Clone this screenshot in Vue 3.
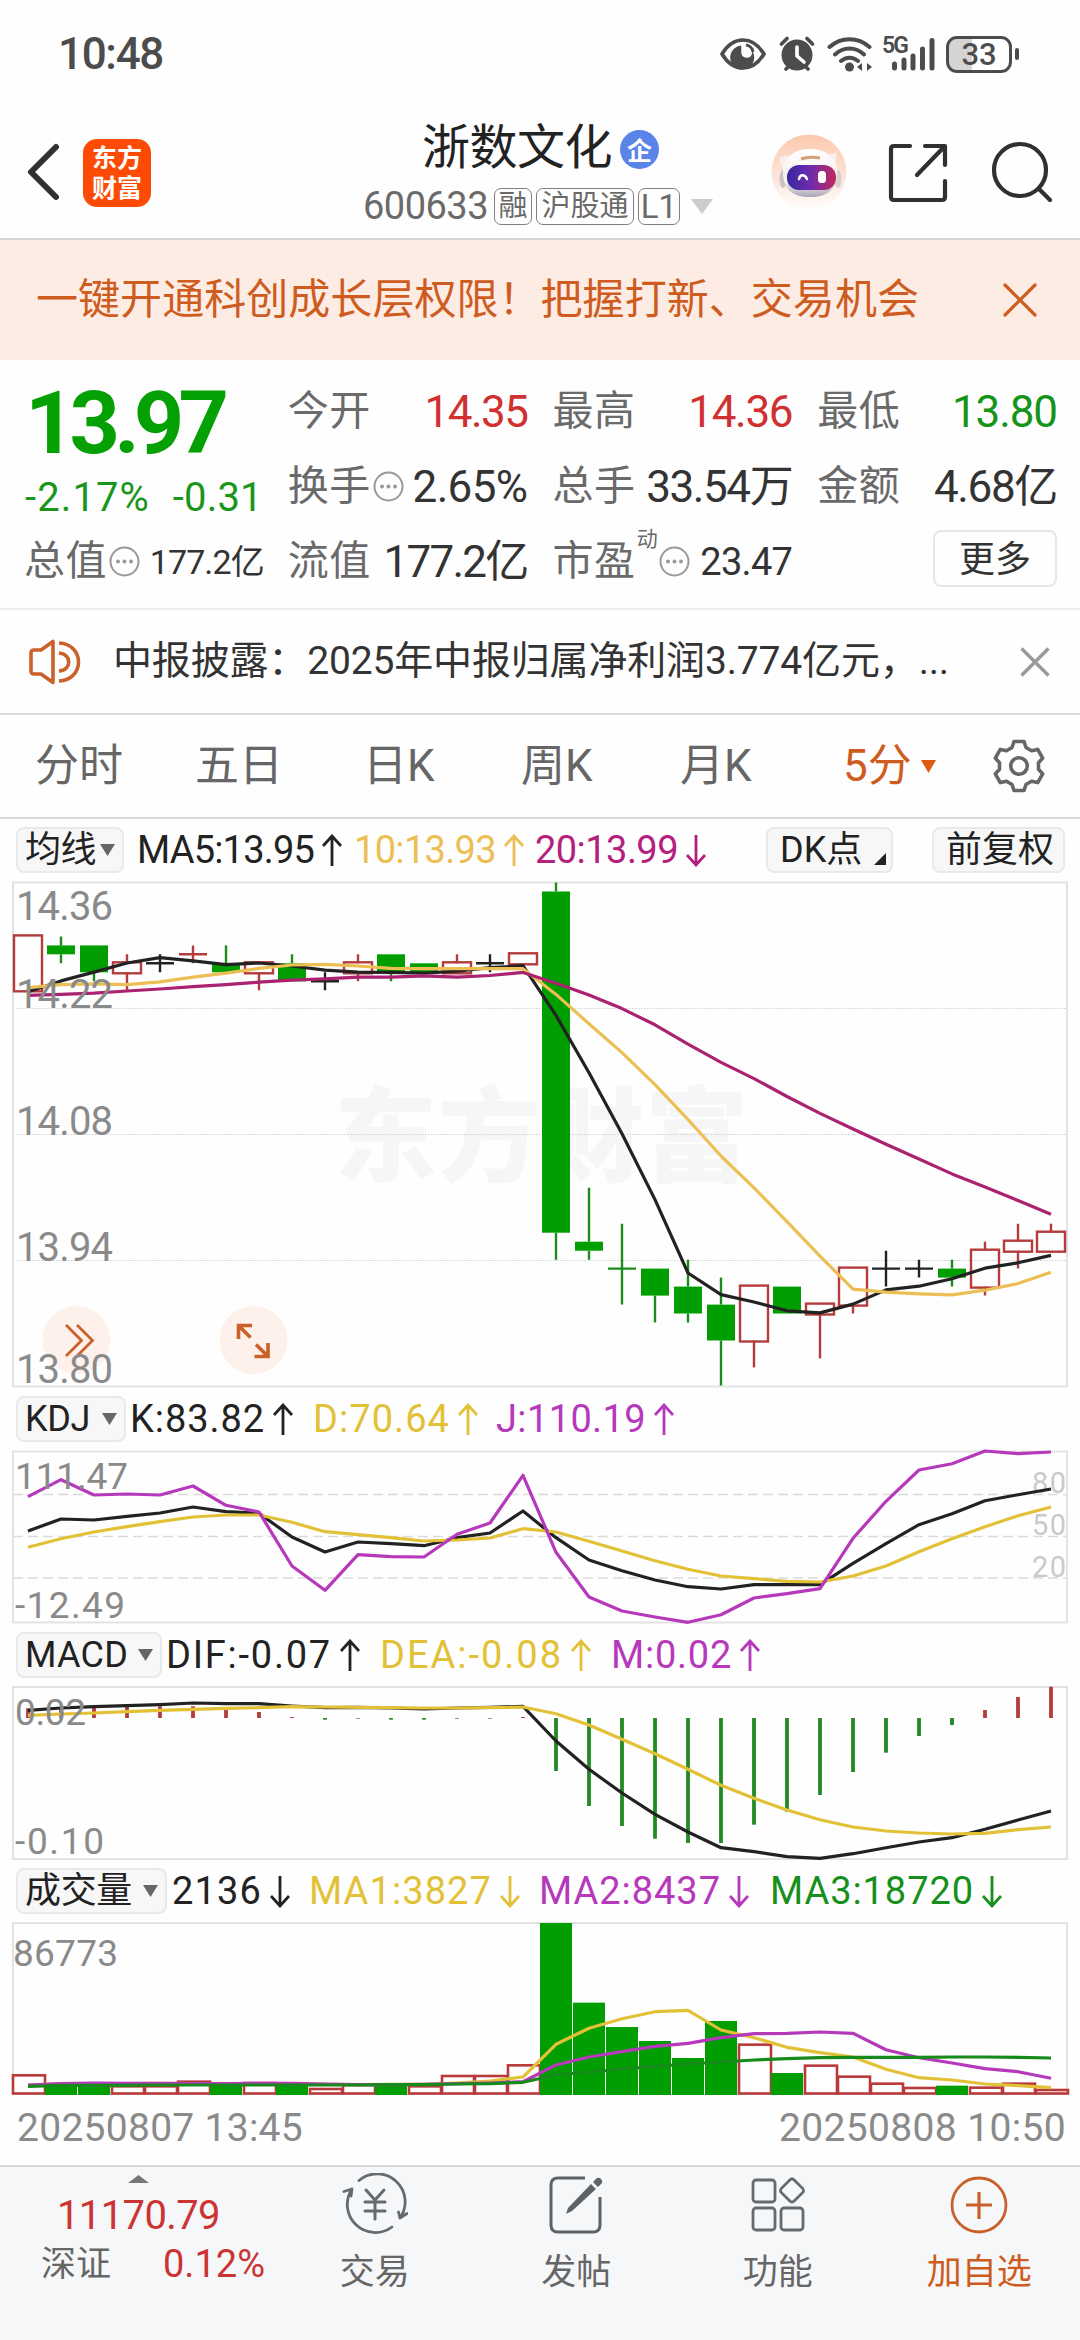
<template>
  <div class="page">
    <div class="status">
      <span v-fit="105" class="clock">10:48</span>
      <div class="status-icons">
        <svg class="eye" width="46" height="34" viewBox="0 0 46 34">
          <path d="M2 17C8 7 15 3 23 3s15 4 21 14c-6 10-13 14-21 14S8 27 2 17z" fill="none" stroke="#4c4c4c" stroke-width="3.6" />
          <path d="M21 8.500a12 12 0 1 0 11 5c1 7-5 9-9 6-3-3-1-7-2-11z" fill="#4c4c4c" />
          <path d="M26 8a8 8 0 0 1 7 7" fill="none" stroke="#4c4c4c" stroke-width="3" />
        </svg>
        <svg class="alarm" width="36" height="36" viewBox="0 0 36 36" stroke="#4c4c4c" stroke-width="3.600" stroke-linecap="round">
          <path d="M2.500 8L8 2.500M33.500 8L28 2.500M7 33l4-4M29 33l-4-4" />
          <circle cx="18" cy="19" r="15.500" fill="#4c4c4c" stroke="none" />
          <path d="M18 11v9l7 6" fill="none" stroke="#fff" />
        </svg>
        <svg class="wifi" width="46" height="36" viewBox="0 0 46 36" fill="none" stroke="#4c4c4c" stroke-width="4" stroke-linecap="round">
          <path d="M2.500 11C14 .500 31 .500 42.500 11M8 18.500c8.500-8 20.500-8 29 0M14 25c5-4.500 12-4.500 17 0" />
          <circle cx="22.500" cy="31" r="4.500" fill="#4c4c4c" stroke="none" />
          <path d="M35 27v8l-5-4zM38 27v8M40 27l5 4-5 4z" fill="#4c4c4c" stroke="none" />
        </svg>
        <div class="signal">
          <span class="net">5G</span>
          <svg width="44" height="34" viewBox="0 0 44 34" stroke="#4c4c4c" stroke-width="5" stroke-linecap="round">
            <path d="M3.500 27v4M13 23v8M22 19v12M31.500 12v19M41 3.500v27.500" />
          </svg>
        </div>
        <div class="battery"><span>33</span></div>
        <i class="nub"></i>
      </div>
    </div>

    <header class="header">
      <svg class="back" width="34" height="58" viewBox="0 0 34 58"><path d="M30 4L5 29l25 25" fill="none" stroke="#2f3031" stroke-width="6" stroke-linecap="round" stroke-linejoin="round" /></svg>
      <div class="logo"><span>东方</span><span>财富</span></div>
      <div class="title-box">
        <div class="title"><span v-fit="190">浙数文化</span><i class="badge">企</i></div>
        <div class="sub">
          <span v-fit="125" class="code">600633</span>
          <b class="tag">融</b><b class="tag wide">沪股通</b><b class="tag l1">L1</b>
          <svg width="22" height="15" viewBox="0 0 22 15"><path d="M0 0h22L11 15z" fill="#ccc" /></svg>
        </div>
      </div>
      <svg class="robot" width="76" height="76" viewBox="0 0 76 76">
        <defs>
          <linearGradient id="halo" x1="0" y1="0" x2="0" y2="1">
            <stop offset="0" stop-color="#fcc9ae" /><stop offset=".6" stop-color="#fde6dc" /><stop offset="1" stop-color="#fffdfc" />
          </linearGradient>
          <linearGradient id="shell" x1="0" y1="0" x2="0" y2="1">
            <stop offset="0" stop-color="#fff" /><stop offset=".7" stop-color="#f3ecea" /><stop offset="1" stop-color="#a9a5b4" />
          </linearGradient>
          <linearGradient id="visor" x1="0" y1="0" x2="1" y2="0">
            <stop offset="0" stop-color="#37289f" /><stop offset=".45" stop-color="#6a2bb0" /><stop offset="1" stop-color="#c22a5c" />
          </linearGradient>
        </defs>
        <circle cx="38" cy="38" r="37.500" fill="url(#halo)" />
        <ellipse cx="12" cy="45" rx="3.500" ry="9" fill="#c9c2c4" />
        <ellipse cx="67" cy="45" rx="3.500" ry="9" fill="#d9ced0" />
        <path d="M8 24l8-3 4 10-7 8zM66 19l-8 1-3 9 9 6z" fill="#f8eeea" />
        <path d="M12 38c0-15 12-23 27-23s27 8 27 23c0 18-10 25-27 25S12 56 12 38z" fill="url(#shell)" />
        <path d="M30 25q8-3 19-1" stroke="#d6a075" stroke-width="3" fill="none" />
        <rect x="16" y="31" width="49" height="25" rx="12" fill="url(#visor)" />
        <path d="M28 45c1-5 6-5 8 0" stroke="#fff" stroke-width="2.500" fill="none" stroke-linecap="round" />
        <rect x="47" y="37" width="8" height="12" rx="3.500" fill="#fff" />
      </svg>
      <svg class="share" width="60" height="60" viewBox="0 0 60 60" fill="none" stroke="#2f3031" stroke-width="4.200" stroke-linecap="round" stroke-linejoin="round">
        <path d="M22 3H6q-3 0-3 3v48q0 3 3 3h48q3 0 3-3V38" />
        <path d="M37 3h20v19M56 4L29 32" />
      </svg>
      <svg class="search" width="62" height="62" viewBox="0 0 62 62" fill="none" stroke="#2f3031" stroke-width="4.200" stroke-linecap="round">
        <circle cx="29" cy="29" r="26" /><path d="M48 48l11 11" />
      </svg>
    </header>

    <div class="banner">
      <span v-fit="883">一键开通科创成长层权限！把握打新、交易机会</span>
      <svg width="34" height="34" viewBox="0 0 34 34"><path d="M2 2l30 30M32 2L2 32" stroke="#cf5c1f" stroke-width="3.200" stroke-linecap="round" /></svg>
    </div>

    <section class="quote">
      <div class="col first">
        <div class="price"><span v-fit="198">13.97</span></div>
        <div class="change"><span v-fit="125">-2.17%</span><span v-fit="90">-0.31</span></div>
        <div class="cell">
          <span class="label">总值</span><MoreDot />
          <span v-fit="114" class="value small">177.2亿</span>
        </div>
      </div>
      <div v-for="(col, c) in quoteCols" :key="c" class="col">
        <div v-for="q in col" :key="q.label" class="cell">
          <span class="label">{{ q.label }}</span><sup v-if="q.sup">{{ q.sup }}</sup><MoreDot v-if="q.dot" />
          <span v-fit="q.w" class="value" :class="q.cls">{{ q.value }}</span>
        </div>
        <button v-if="c === 2" class="more">更多</button>
      </div>
    </section>

    <div class="news">
      <svg width="52" height="46" viewBox="0 0 52 46" fill="none" stroke="#c9622b" stroke-width="3.600" stroke-linejoin="round">
        <path d="M24 2.500v41L12 35H5q-3 0-3-3V14q0-3 3-3h7z" />
        <path d="M30 4c26 1 26 37 0 38M30 14c13 1 13 17 0 18" stroke-linecap="butt" />
      </svg>
      <span v-fit="836" class="news-text">中报披露：2025年中报归属净利润3.774亿元，...</span>
      <svg class="close" width="30" height="30" viewBox="0 0 30 30"><path d="M1.500 1.500l27 27M28.500 1.500l-27 27" stroke="#999" stroke-width="3.400" /></svg>
    </div>

    <nav class="tabs">
      <span v-for="t in tabs" :key="t">{{ t }}</span>
      <span class="active">5分<svg width="15" height="13" viewBox="0 0 15 13"><path d="M0 0h15L7.500 13z" fill="#dd5a10" /></svg></span>
      <svg class="gear" width="54" height="54" viewBox="-27 -27 54 54" fill="none" stroke="#666" stroke-width="3.600" stroke-linejoin="round">
        <polygon :points="gear" /><circle r="8.300" />
      </svg>
    </nav>

    <IndicatorRow :row="rows.ma">
      <button class="chip dk">DK点<i></i></button>
      <button class="chip fq">前复权</button>
    </IndicatorRow>
    <svg class="chart" width="1080" height="507" viewBox="0 881 1080 507">
      <text class="watermark" x="334" y="1174" textLength="414">东方财富</text>
      <rect class="frame" x="13" y="882.500" width="1054" height="504" />
      <path class="dots" d="M17 1008.500H1066M17 1134.500H1066M17 1260.500H1066" />
      <circle v-for="x in [76.5, 253.5]" :key="x" :cx="x" cy="1340" r="34" fill="#fef0ea" />
      <path class="tool" d="M66 1325l15.500 15.500L66 1356M77 1325l15.500 15.500L77 1356" />
      <path class="tool thick" d="M238.500 1339v-13.500H252M238.500 1325.500l12 12M268 1343v13.500H254.500M268 1356.500l-12-12" />
      <g v-for="(k, i) in candles" :key="i" :class="k.color">
        <path :d="k.wick" class="wick" />
        <rect v-if="k.body" class="body" v-bind="k.body" />
      </g>
      <polyline v-for="l in priceLines" :key="l.color" :points="l.points" :stroke="l.color" class="line" />
      <text v-for="p in priceLabels" :key="p.t" class="axis big" x="16" :y="p.y" textLength="97">{{ p.t }}</text>
    </svg>

    <IndicatorRow :row="rows.kdj" />
    <svg class="chart" width="1080" height="174" viewBox="0 1449 1080 174">
      <rect class="frame" x="13" y="1450.500" width="1054" height="171" />
      <path class="dashes" d="M13 1493.500H1066M13 1535.500H1066M13 1577H1066" />
      <text v-for="r in [{ t: '80', y: 1492 }, { t: '50', y: 1534 }, { t: '20', y: 1576 }]" :key="r.t" class="ref" x="1032" :y="r.y" textLength="34">{{ r.t }}</text>
      <polyline v-for="l in kdjLines" :key="l.color" :points="l.points" :stroke="l.color" class="line" />
      <text class="axis" x="15" y="1488" textLength="113">111.47</text>
      <text class="axis" x="15" y="1617" textLength="110">-12.49</text>
    </svg>

    <IndicatorRow :row="rows.macd" />
    <svg class="chart" width="1080" height="174" viewBox="0 1685 1080 174">
      <rect class="frame" x="13" y="1686" width="1054" height="172" />
      <path v-for="(b, i) in macdBars" :key="i" :d="b.d" :stroke="b.color" stroke-width="3.800" />
      <polyline v-for="l in macdLines" :key="l.color" :points="l.points" :stroke="l.color" class="line" />
      <text class="axis" x="15" y="1724" textLength="71">0.02</text>
      <text class="axis" x="15" y="1853" textLength="89">-0.10</text>
    </svg>

    <IndicatorRow :row="rows.vol" />
    <svg class="chart" width="1080" height="174" viewBox="0 1921 1080 174">
      <rect class="frame" x="13" y="1922" width="1054" height="171" />
      <rect v-for="(b, i) in volBars" :key="i" v-bind="b" stroke-width="2.600" />
      <polyline v-for="l in volLines" :key="l.color" :points="l.points" :stroke="l.color" class="line" />
      <text class="axis" x="13" y="1965" textLength="105">86773</text>
    </svg>

    <div class="dates"><span v-fit="286">20250807 13:45</span><span v-fit="287">20250808 10:50</span></div>

    <footer class="bottom">
      <div class="index">
        <svg width="21" height="8" viewBox="0 0 21 8"><path d="M10.500 0L21 8H0z" fill="#777" /></svg>
        <span v-fit="163" class="index-value">11170.79</span>
        <div class="index-row"><span>深证</span><span v-fit="102" class="rate">0.12%</span></div>
      </div>
      <div class="action">
        <svg width="66" height="62" viewBox="0 0 66 62" fill="none" stroke="#666a6e" stroke-width="2.800" stroke-linecap="round" stroke-linejoin="round">
          <path d="M17 7.500A28 28 0 0 1 58 45l7-4.500M50 54A28 28 0 0 1 10 16l-8 2.500M58 45l-1.500-6M10 16l-1 7" />
          <path d="M24 17l9 10 9-10M23 29h20M23 38h20M33 28v18" stroke-width="3" />
        </svg>
        <span>交易</span>
      </div>
      <div class="action">
        <svg width="56" height="62" viewBox="0 0 56 62" fill="none" stroke="#5f6265" stroke-width="3">
          <path d="M37 5H10q-7 0-7 7v40q0 7 7 7h35q7 0 7-7V24" />
          <path d="M45 9l4-4q2-1 4 1t1 4l-4 4zM43 11l5 5-24 22-6 3 2-6z" fill="#5f6265" stroke="none" />
        </svg>
        <span>发帖</span>
      </div>
      <div class="action">
        <svg width="56" height="62" viewBox="0 0 56 62" fill="none" stroke="#666a6e" stroke-width="2.800" stroke-linejoin="round">
          <rect x="3" y="7" width="22" height="22" rx="3" />
          <rect x="3" y="35" width="22" height="22" rx="3" />
          <rect x="31" y="35" width="22" height="22" rx="3" />
          <rect x="33" y="8.500" width="18" height="18" rx="3" transform="rotate(45 42 17.500)" />
        </svg>
        <span>功能</span>
      </div>
      <div class="action add">
        <svg width="60" height="62" viewBox="0 0 60 62" fill="none" stroke="#c9602a" stroke-width="2.800">
          <circle cx="30" cy="32" r="27" /><path d="M17 32h26M30 19v27" stroke-width="3.200" />
        </svg>
        <span>加自选</span>
      </div>
    </footer>
  </div>
</template>

<script setup>
import { h } from 'vue';

// Spreads the letters so that the text takes exactly the given width
const fit = (el, width) => {
  const natural = el.getBoundingClientRect().width;
  el.style.letterSpacing = (width - natural) / el.textContent.length + 'px';
};

const vFit = {
  mounted: (el, { value }) => fit(el, value)
};

const MoreDot = () => h('svg', { width: 31, height: 31, viewBox: '0 0 31 31', style: 'flex:none' }, [
  h('circle', { cx: 15.5, cy: 15.5, r: 14, fill: 'none', stroke: '#999', 'stroke-width': 2 }),
  ...[9, 15.5, 22].map((cx) => h('circle', { cx, cy: 15.5, r: 2, fill: '#999' }))
]);

const fitted = (text, w) => h('span', { onVnodeMounted: (v) => fit(v.el, w) }, text);

const IndicatorRow = (props, { slots }) => h('div', { class: 'ind-row' }, [
  h('button', { class: 'chip', style: { width: props.row.chipWidth + 'px' } }, [
    fitted(props.row.name, props.row.nameWidth),
    h('svg', { width: 15, height: 12, viewBox: '0 0 15 12' }, h('path', { d: 'M0 0h15L7.500 12z', fill: '#666' }))
  ]),
  ...props.row.items.map((it) => h('span', { class: 'ind', style: { color: it.color, marginLeft: it.ml + 'px' } }, [
    fitted(it.text, it.w),
    h('svg', { width: 20, height: 33, viewBox: '0 0 20 33' },
      h('path', {
        d: it.up ? 'M10 32V2M1 12l9-10 9 10' : 'M10 1v30M1 21l9 10 9-10',
        fill: 'none', stroke: 'currentColor', 'stroke-width': 2.8
      }))
  ])),
  slots.default?.()
]);
IndicatorRow.props = ['row'];

const quoteCols = [
  [
    { label: '今开', value: '14.35', w: 103, cls: 'red' },
    { label: '换手', value: '2.65%', w: 115, dot: true },
    { label: '流值', value: '177.2亿', w: 144 }
  ],
  [
    { label: '最高', value: '14.36', w: 104, cls: 'red' },
    { label: '总手', value: '33.54万', w: 146 },
    { label: '市盈', sup: '动', dot: true, value: '23.47', w: 92, cls: 'mid' }
  ],
  [
    { label: '最低', value: '13.80', w: 105, cls: 'green' },
    { label: '金额', value: '4.68亿', w: 123 }
  ]
];

const tabs = ['分时', '五日', '日K', '周K', '月K'];

const black = '#222';
const amber = '#ecbf55';
const yellow = '#e2c137';
const purple = '#b638bb';
const magenta = '#ab2370';
const green = '#009e00';

const rows = {
  ma: {
    name: '均线', nameWidth: 71, chipWidth: 108, items: [
      { text: 'MA5:13.95', color: black, ml: 13, w: 177, up: true },
      { text: '10:13.93', color: amber, ml: 12, w: 142, up: true },
      { text: '20:13.99', color: '#b5207c', ml: 11, w: 143 }
    ]
  },
  kdj: {
    name: 'KDJ', nameWidth: 65, chipWidth: 110, items: [
      { text: 'K:83.82', color: black, ml: 4, w: 135, up: true },
      { text: 'D:70.64', color: yellow, ml: 20, w: 137, up: true },
      { text: 'J:110.19', color: purple, ml: 18, w: 150, up: true }
    ]
  },
  macd: {
    name: 'MACD', nameWidth: 103, chipWidth: 146, items: [
      { text: 'DIF:-0.07', color: black, ml: 4, w: 166, up: true },
      { text: 'DEA:-0.08', color: yellow, ml: 20, w: 183, up: true },
      { text: 'M:0.02', color: purple, ml: 20, w: 121, up: true }
    ]
  },
  vol: {
    name: '成交量', nameWidth: 107, chipWidth: 151, items: [
      { text: '2136', color: black, ml: 5, w: 90 },
      { text: 'MA1:3827', color: yellow, ml: 19, w: 183 },
      { text: 'MA2:8437', color: purple, ml: 19, w: 182 },
      { text: 'MA3:18720', color: '#16901a', ml: 21, w: 204 }
    ]
  }
};

const cx = (i) => 27 + 33 * i;
const toPoints = (ys, base, scale) => ys.map((y, i) => `${cx(i) + 1},${(base + y / scale).toFixed(1)}`).join(' ');

// open, close, high, low in cents above 13.00; equal open and close draws a cross
const ohlc = [
  ['r', 130, 124, 130, 124], ['g', 129, 128, 130, 127], ['g', 129, 126, 129, 125], ['r', 127, 126, 128, 124],
  ['k', 127, 127, 128, 126], ['r', 128, 128, 129, 127], ['g', 127, 126, 129, 126], ['r', 127, 126, 127, 124],
  ['g', 127, 125, 128, 125], ['k', 125, 125, 126, 124], ['r', 127, 126, 128, 125], ['g', 128, 126, 128, 125],
  ['g', 127, 126, 127, 126], ['r', 127, 126, 128, 126], ['k', 127, 127, 128, 126], ['r', 128, 127, 128, 127],
  ['g', 135, 97, 136, 94], ['g', 96, 95, 102, 94], ['g', 93, 93, 98, 89], ['g', 93, 90, 93, 87],
  ['g', 91, 88, 94, 87], ['g', 89, 85, 92, 80], ['r', 91, 85, 91, 82], ['g', 91, 88, 91, 88],
  ['r', 89, 88, 89, 83], ['r', 93, 89, 93, 88], ['k', 93, 93, 95, 91], ['k', 93, 93, 94, 92],
  ['g', 93, 92, 94, 91], ['r', 95, 91, 96, 90], ['r', 96, 95, 98, 93], ['r', 97, 95, 98, 95]
];
const py = (p) => +(882.5 + (136 - p) * 8.98).toFixed(1);
const candles = ohlc.map(([color, top, bottom, high, low], i) => {
  const x = cx(i);
  const flat = top === bottom;
  let wick = `M${x + 1} ${py(high)}V${py(top)}M${x + 1} ${py(bottom)}V${py(low)}`;
  if (flat) wick += `M${x - 13} ${py(top)}H${x + 15}`;
  const inset = color === 'r' ? 1 : 0;
  return {
    color,
    wick,
    body: flat ? null : { x: x - 13, y: py(top) - inset, width: 28, height: py(bottom) - py(top) + inset * 2 }
  };
});

const priceLabels = [
  { t: '14.36', y: 920 }, { t: '14.22', y: 1008 }, { t: '14.08', y: 1134.5 }, { t: '13.94', y: 1261 }, { t: '13.80', y: 1383 }
];

const priceLines = [
  { color: black, ys: [360, 328, 302, 275, 259, 269, 280, 275, 284, 296, 302, 303, 305, 299, 289, 283, 430, 600, 780, 975, 1192, 1256, 1278, 1304, 1310, 1284, 1242, 1231, 1209, 1178, 1162, 1140] },
  { color: amber, ys: [348, 339, 337, 339, 331, 317, 305, 291, 281, 279, 284, 291, 292, 292, 292, 292, 368, 455, 540, 635, 738, 846, 940, 1040, 1142, 1240, 1249, 1254, 1257, 1243, 1223, 1190] },
  { color: magenta, ys: [371, 368, 364, 358, 352, 345, 339, 332, 326, 322, 317, 317, 313, 317, 312, 303, 335, 370, 410, 458, 515, 569, 617, 670, 720, 766, 811, 855, 899, 938, 978, 1018] }
].map((l) => ({ color: l.color, points: toPoints(l.ys, 870, 2.958) }));

const kdjLines = [
  { color: black, ys: [420, 384, 387, 376, 366, 348, 362, 367, 438, 483, 453, 458, 464, 440, 426, 360, 440, 507, 539, 567, 587, 594, 581, 581, 581, 517, 458, 401, 368, 329, 311, 294] },
  { color: yellow, ys: [469, 443, 423, 407, 392, 378, 372, 372, 394, 422, 431, 440, 450, 447, 441, 413, 423, 451, 480, 509, 535, 555, 563, 571, 573, 555, 525, 482, 443, 407, 374, 348] },
  { color: purple, ys: [317, 266, 312, 309, 312, 285, 343, 363, 525, 598, 491, 497, 498, 430, 396, 253, 484, 618, 660, 678, 694, 671, 621, 608, 593, 442, 331, 237, 218, 180, 188, 183] }
].map((l) => ({ color: l.color, points: toPoints(l.ys, 1390, 3) }));

const macdBars = [952, 948, 948, 944, 946, 946, 957, 963, 978, 986, 983, 986, 986, 983, 983, 978, 1140, 1245, 1305, 1343, 1356, 1356, 1301, 1262, 1212, 1143, 1085, 1035, 1002, 957, 918, 887]
  .map((y, i) => ({ d: `M${cx(i) + 1} 1717V${(1390 + y / 3).toFixed(1)}`, color: y < 981 ? '#b23c3c' : '#238a23' }));

const macdLines = [
  { color: black, ys: [958, 951, 947, 944, 941, 936, 938, 938, 945, 950, 949, 951, 954, 951, 949, 946, 1050, 1135, 1206, 1270, 1323, 1370, 1382, 1397, 1402, 1388, 1370, 1353, 1340, 1315, 1287, 1260] },
  { color: yellow, ys: [973, 969, 966, 962, 958, 955, 952, 950, 947, 948, 949, 950, 951, 951, 950, 948, 968, 1002, 1045, 1088, 1135, 1183, 1222, 1257, 1286, 1308, 1320, 1326, 1329, 1327, 1316, 1308] }
].map((l) => ({ color: l.color, points: toPoints(l.ys, 1390, 3) }));

const volUp = [0, 3, 4, 5, 7, 9, 10, 12, 13, 14, 15, 22, 24, 25, 26, 27, 29, 30, 31];
const volBars = [643, 668, 670, 676, 676, 662, 668, 666, 672, 684, 672, 668, 676, 645, 645, 613, 186, 425, 498, 540, 591, 480, 551, 636, 614, 647, 668, 681, 674, 680, 668, 687]
  .map((v, i) => {
    const up = volUp.includes(i);
    const y = 1860 + v / 3;
    return up
      ? { x: cx(i) - 14, y, width: 32, height: 2092.5 - y, fill: '#fff', stroke: '#b83a3a' }
      : { x: cx(i) - 15, y, width: 32, height: 2094 - y, fill: green, stroke: 'none' };
  });

const volLines = [
  { color: yellow, ys: [672, 668, 668, 668, 667, 668, 669, 669, 668, 670, 671, 670, 670, 666, 660, 648, 550, 502, 473, 452, 448, 507, 530, 559, 575, 588, 625, 650, 657, 669, 674, 680] },
  { color: purple, ys: [672, 668, 666, 667, 667, 668, 668, 667, 667, 669, 671, 671, 670, 668, 666, 662, 612, 588, 572, 556, 547, 530, 518, 517, 513, 517, 566, 590, 606, 623, 632, 652] },
  { color: '#168a1a', ys: [676, 673, 673, 673, 672, 672, 672, 672, 672, 672, 672, 671, 671, 669, 668, 664, 642, 633, 624, 616, 609, 603, 597, 593, 590, 589, 589, 589, 588, 588, 589, 591] }
].map((l) => ({ color: l.color, points: toPoints(l.ys, 1860, 3) }));

// six teeth, each one the same four corners turned by 60 degrees
const gear = [0, 60, 120, 180, 240, 300].flatMap((deg) => {
  const a = (deg * Math.PI) / 180;
  return [[-7, -18.5], [-5, -24.5], [5, -24.5], [7, -18.5]].map(([x, y]) =>
    `${(x * Math.cos(a) - y * Math.sin(a)).toFixed(1)},${(x * Math.sin(a) + y * Math.cos(a)).toFixed(1)}`);
}).join(' ');
</script>

<style>
body {
  background: #fefefe;
}

.ind-row {
  display: flex;
  align-items: center;
  height: 62px;
  padding: 0 16px;
}

.chip {
  box-sizing: border-box;
  flex: none;
  display: flex;
  align-items: center;
  justify-content: space-between;
  height: 46px;
  padding: 0 7px 0 7px;
  border: 2px solid #e9e9e9;
  border-radius: 8px;
  background: #f7f7f7;
  font: 36px/1 Roboto, "Noto Sans CJK SC", sans-serif;
  color: #222;
  white-space: nowrap;
}

.ind {
  flex: none;
  display: flex;
  align-items: center;
  gap: 8px;
  font-size: 38px;
  line-height: 1;
}
</style>

<style scoped>
.page {
  width: 1080px;
  height: 2340px;
  overflow: hidden;
  display: flex;
  flex-direction: column;
  background: #fefefe;
  font-family: Roboto, "Noto Sans CJK SC", sans-serif;
  line-height: 1;
  white-space: nowrap;
  color: #333;
}

.page > * {
  flex: none;
  box-sizing: border-box;
}

.page svg {
  flex: none;
}

.status {
  height: 108px;
  padding: 0 61px 0 58px;
  display: flex;
  align-items: center;
  justify-content: space-between;
}

.clock {
  font-size: 44px;
  font-weight: 500;
  color: #4c4c4c;
}

.status-icons {
  display: flex;
  align-items: center;
}

.alarm {
  margin-left: 13px;
}

.wifi {
  margin-left: 12px;
}

.signal {
  display: flex;
  width: 62px;
  margin-left: 0;
  position: relative;
  justify-content: flex-end;
  align-items: center;
  padding-right: 1px;
}

.net {
  position: absolute;
  left: 9px;
  top: -3px;
  font-size: 23px;
  font-weight: 600;
  color: #4c4c4c;
  letter-spacing: -2px;
}

.battery {
  box-sizing: border-box;
  width: 66px;
  height: 37px;
  margin-left: 10px;
  border: 3px solid #4c4c4c;
  border-radius: 11px;
  background: linear-gradient(90deg, #d4d4d4 38%, #fff 38%);
  display: flex;
  align-items: center;
  justify-content: center;
  font-size: 31px;
  font-weight: 500;
  color: #4c4c4c;
}

.nub {
  width: 4px;
  height: 12px;
  margin-left: 3px;
  border-radius: 2px;
  background: #4c4c4c;
}

.header {
  height: 132px;
  border-bottom: 2px solid #d8d5d3;
  display: flex;
  align-items: flex-start;
  padding-left: 26px;
}

.back {
  margin-top: 35px;
}

.logo {
  width: 68px;
  height: 68px;
  margin: 31px 0 0 23px;
  border-radius: 14px;
  background: #fd4a05;
  display: flex;
  flex-direction: column;
  align-items: center;
  justify-content: center;
  gap: 5px;
  font-size: 25px;
  font-weight: 700;
  color: #fff;
}

.title-box {
  width: 353px;
  margin: 15px 0 0 212px;
}

.title {
  display: flex;
  align-items: center;
  height: 50px;
  padding-left: 59px;
  font-size: 48px;
  color: #222;
}

.badge {
  display: flex;
  align-items: center;
  justify-content: center;
  width: 39px;
  height: 39px;
  margin: 2px 0 0 8px;
  border-radius: 50%;
  background: #5a84e8;
  color: #fff;
  font: 700 25px/1 "Noto Sans CJK SC", sans-serif;
}

.sub {
  display: flex;
  align-items: center;
  height: 38px;
  margin-top: 14px;
  color: #6a6a6a;
}

.code {
  font-size: 38px;
  margin-right: 6px;
}

.tag {
  box-sizing: border-box;
  flex: none;
  display: flex;
  align-items: center;
  justify-content: center;
  width: 38px;
  height: 37px;
  margin-right: 4px;
  border: 1.5px solid #808080;
  border-radius: 7px;
  font-size: 29px;
  font-weight: 400;
}

.tag.wide {
  width: 98px;
}

.tag.l1 {
  width: 42px;
  margin-right: 11px;
  font-size: 33px;
}

.robot {
  margin: 26px 0 0 55px;
}

.share {
  margin: 35px 0 0 41px;
}

.search {
  margin: 33px 0 0 43px;
}

.banner {
  height: 120px;
  padding: 0 43px 0 36px;
  background: #fcece4;
  display: flex;
  align-items: center;
  justify-content: space-between;
  font-size: 42px;
  color: #cf5c1f;
}

.quote {
  height: 250px;
  border-bottom: 2px solid #ececec;
  padding: 14px 23px 0 24px;
  display: flex;
}

.col {
  width: 240px;
  margin-left: 25px;
}

.col.first {
  width: 240px;
  margin: 0 24px 0 0;
}

.col.first + .col {
  margin-left: 0;
}

.price {
  height: 97px;
  padding-left: 1px;
  font-size: 88px;
  font-weight: 700;
  color: #04a004;
  display: flex;
  align-items: center;
}

.change {
  height: 53px;
  display: flex;
  align-items: center;
  justify-content: space-between;
  padding: 0 1px 0 1px;
  font-size: 40px;
  color: #1a961a;
}

.cell {
  position: relative;
  height: 75px;
  display: flex;
  align-items: center;
}

.label {
  font-size: 41px;
  letter-spacing: 0.6px;
  color: #6a6a6a;
  margin-right: 2px;
}

.value {
  margin-left: auto;
  font-size: 44px;
}

.value.small {
  font-size: 34px;
}

.value.mid {
  font-size: 38px;
}

.red {
  color: #d03030;
}

.green {
  color: #16941a;
}

sup {
  align-self: flex-start;
  margin: 5px 1px 0 -1px;
  font-size: 21px;
  color: #6a6a6a;
}

.more {
  box-sizing: border-box;
  display: block;
  width: 124px;
  height: 57px;
  margin: 6px 0 0 auto;
  border: 2px solid #e6e6e6;
  border-radius: 8px;
  background: #fefefe;
  font: 36px/1 "Noto Sans CJK SC", sans-serif;
  color: #333;
  padding: 0 0 6px;
}

.news {
  height: 105px;
  border-bottom: 2px solid #dcdcdc;
  padding: 0 30px 0 29px;
  display: flex;
  align-items: center;
  font-size: 39px;
}

.news-text {
  margin-left: 32px;
}

.close {
  margin-left: auto;
}

.tabs {
  height: 104px;
  border-bottom: 2px solid #d9d9d9;
  padding: 0 34px 0 35px;
  display: grid;
  grid-template-columns: 160px 168px 158px 159px 163px 1fr auto;
  align-items: center;
  font-size: 44px;
  color: #666;
}

.tabs .active {
  display: flex;
  align-items: center;
  gap: 9px;
  color: #cf5c1f;
}

.dk {
  position: relative;
  width: 127px;
  margin-left: 60px;
  padding-left: 12px;
}

.dk i {
  position: absolute;
  right: 5px;
  bottom: 6px;
  border: 6px solid #222;
  border-top-color: transparent;
  border-left-color: transparent;
}

.fq {
  width: 133px;
  margin-left: 39px;
  padding-left: 12px;
}

.chart {
  display: block;
  overflow: visible;
}

.frame {
  fill: none;
  stroke: #e3e3e3;
  stroke-width: 2;
}

.watermark {
  font: 900 103px "Noto Sans CJK SC", sans-serif;
  fill: #f6f6f6;
}

.dots {
  stroke: #cfcfcf;
  stroke-width: 1;
  stroke-dasharray: 1.500 1.500;
}

.dashes {
  stroke: #dadada;
  stroke-width: 1.400;
  stroke-dasharray: 10 5;
}

.tool {
  fill: none;
  stroke: #cb6029;
  stroke-width: 2.800;
}

.tool.thick {
  stroke-width: 3.600;
}

.line {
  fill: none;
  stroke-width: 3.200;
  stroke-linejoin: round;
}

.wick {
  fill: none;
  stroke-width: 2.400;
}

.r .wick,
.r .body {
  stroke: #b43c3c;
}

.r .body {
  fill: none;
  stroke-width: 2.400;
}

.g .wick {
  stroke: #1c8c1c;
}

.g .body {
  fill: #009e00;
}

.k .wick {
  stroke: #222;
}

.axis {
  font-size: 37px;
  fill: #8a8a8a;
}

.axis.big {
  font-size: 40px;
}

.ref {
  font-size: 29px;
  fill: #cacaca;
}

.dates {
  height: 69px;
  padding: 0 14px 4px 17px;
  display: flex;
  align-items: center;
  justify-content: space-between;
  font-size: 39px;
  color: #8a8a8a;
}

.bottom {
  flex: 1;
  border-top: 2px solid #d6d8da;
  background: #f6f7f9;
  display: flex;
}

.index {
  width: 277px;
  margin-right: -3px;
  padding-top: 8px;
  display: flex;
  flex-direction: column;
  align-items: center;
}

.index-value {
  margin-top: 13px;
  font-size: 40px;
  color: #cc3333;
}

.index-row {
  align-self: flex-start;
  width: 224px;
  margin: 9px 0 0 41px;
  display: flex;
  align-items: center;
  justify-content: space-between;
  font-size: 35px;
  color: #666;
}

.index-row .rate {
  font-size: 38px;
  color: #cc3333;
}

.action {
  width: 201.5px;
  padding-top: 6px;
  display: flex;
  flex-direction: column;
  align-items: center;
  gap: 20px;
  font-size: 35px;
  color: #666;
}

.action.add {
  color: #cf5c1f;
}
</style>
